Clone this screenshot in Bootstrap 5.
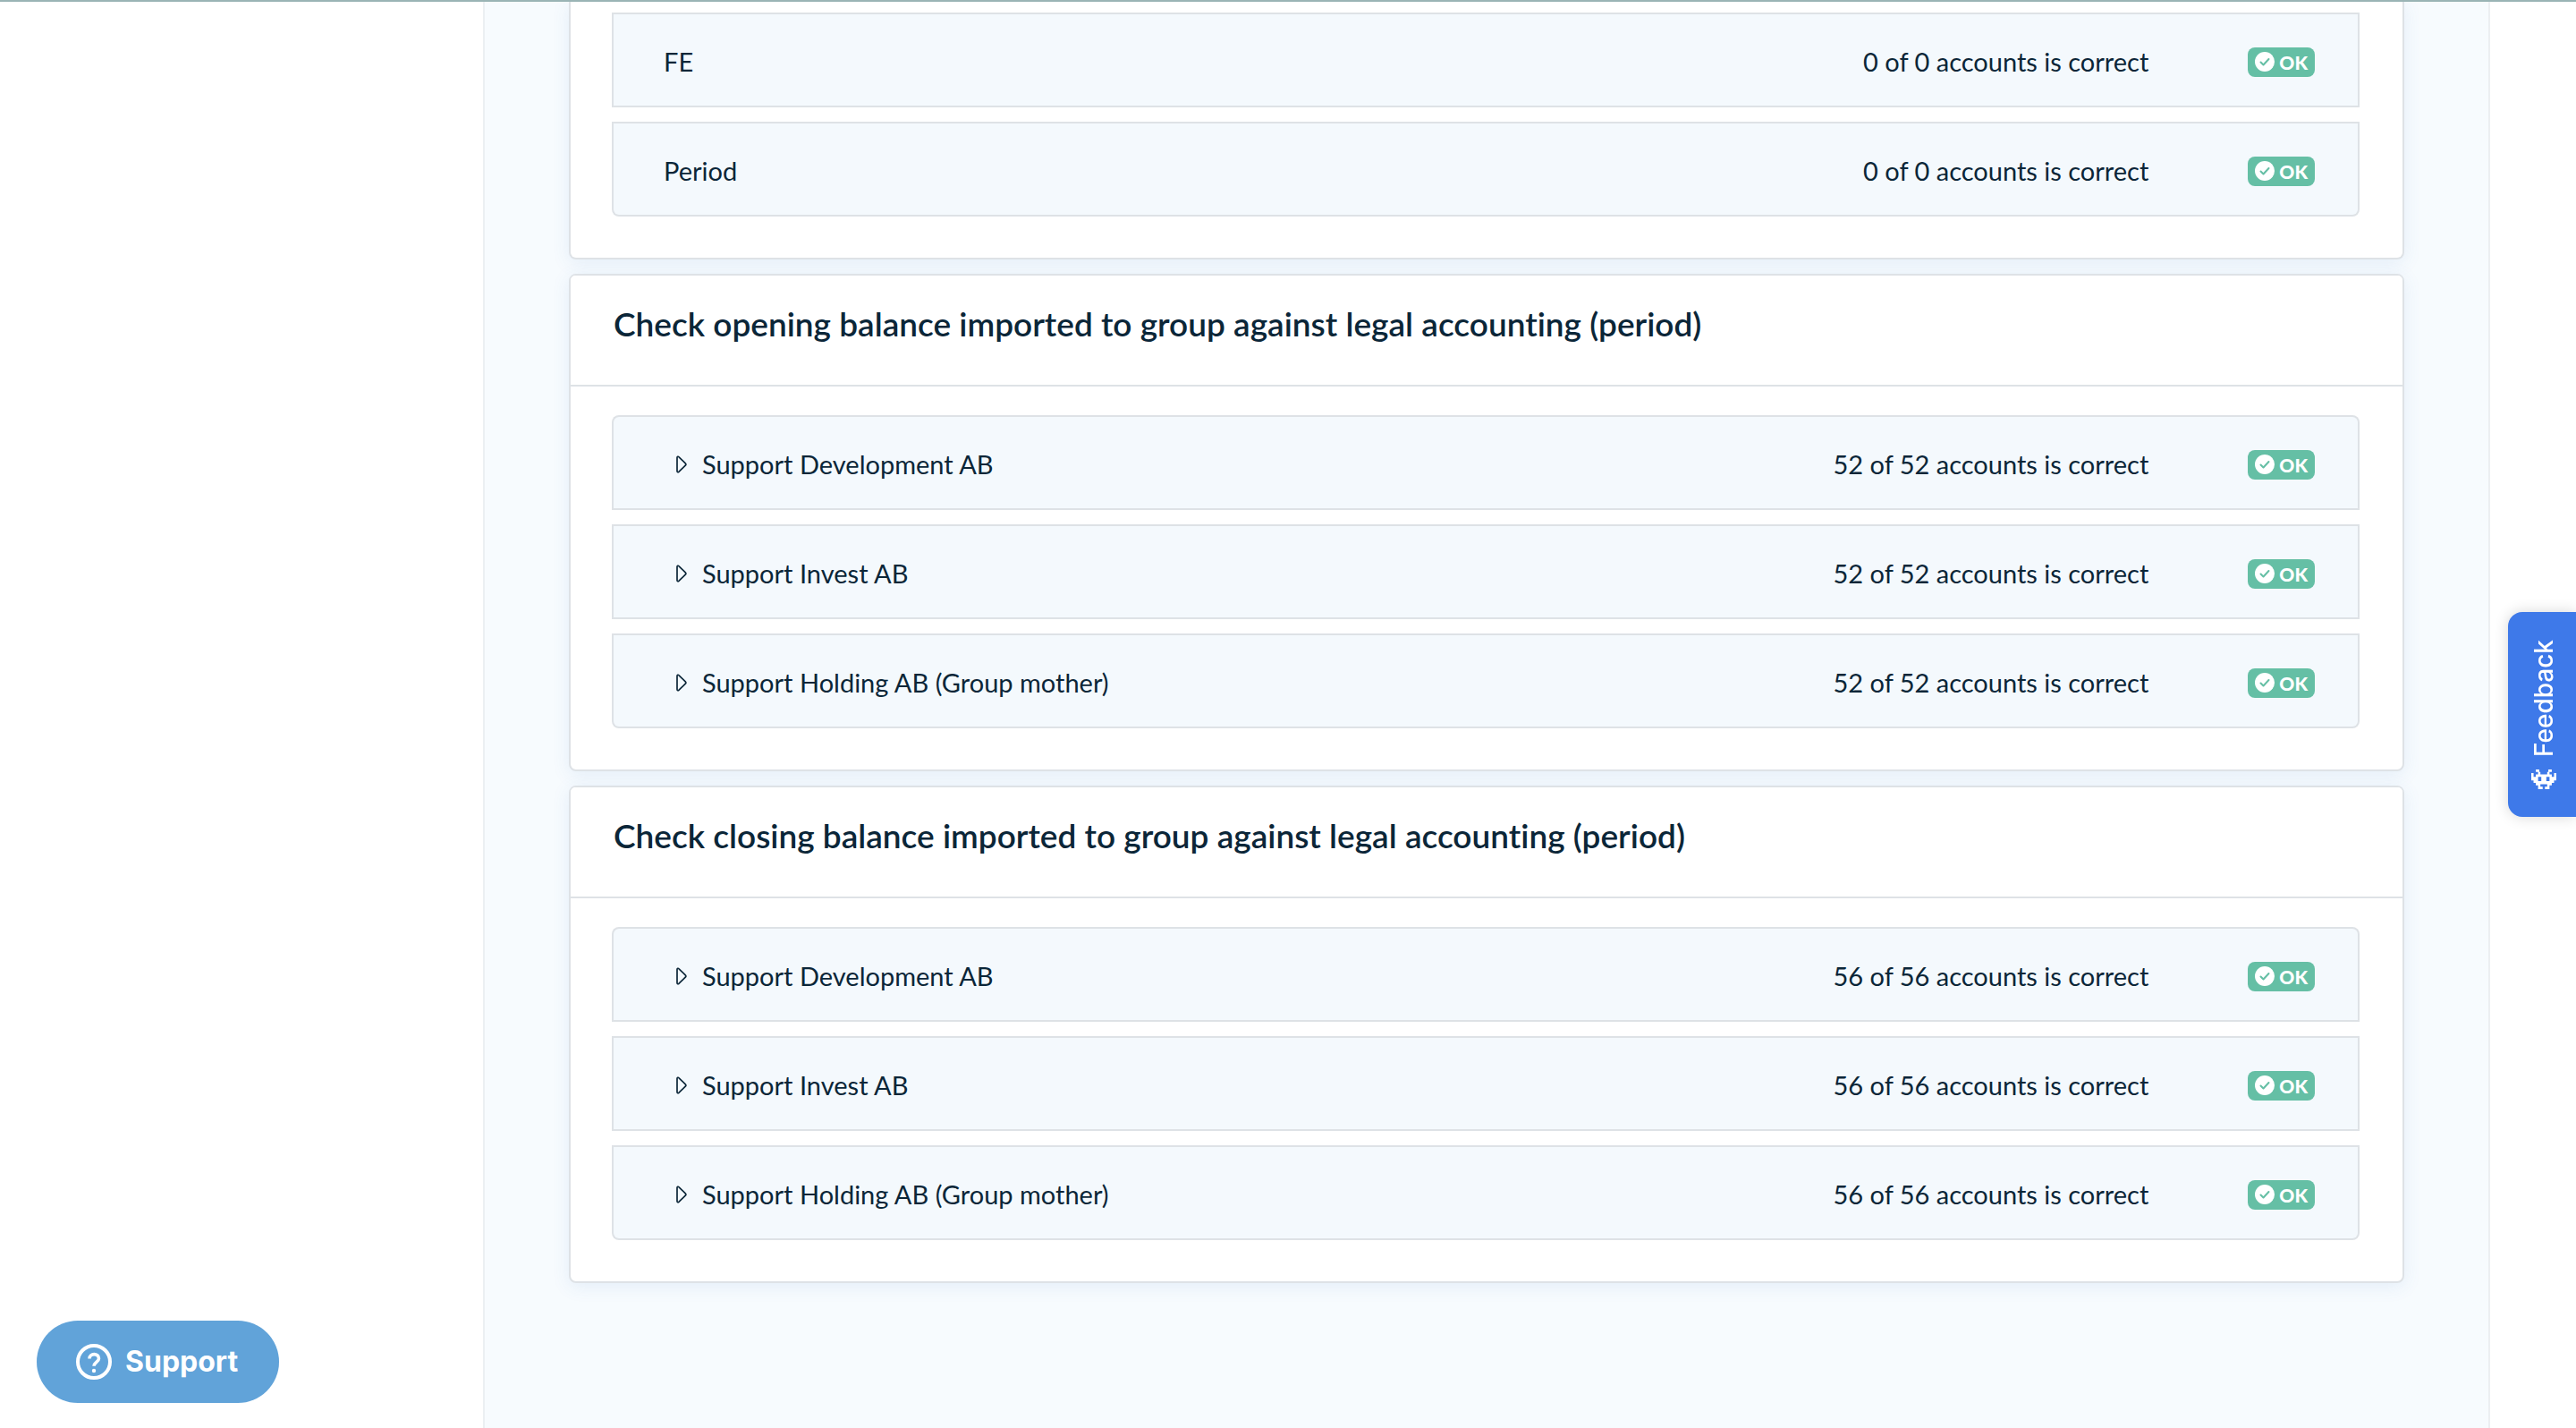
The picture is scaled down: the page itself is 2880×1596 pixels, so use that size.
<!DOCTYPE html>
<html lang="en">
<head>
<meta charset="utf-8">
<meta name="viewport" content="width=device-width, initial-scale=1">
<title>Group balance checks</title>
<link href="https://cdn.jsdelivr.net/npm/bootstrap@5.3.0/dist/css/bootstrap.min.css" rel="stylesheet">
<style>
  body { font-family: Lato, "Open Sans", sans-serif; font-size: 29px; line-height: 40px; color: #0b2638; background: #fff; font-variant-ligatures: none; }
  .top-line { height: 2px; background: #9ab4b5; }
  .side-left { width: 540px; }
  .side-right { width: 96px; }
  .page-main { background: #f7fbfe; border: solid #eceff2; border-width: 0 2px; padding: 2px 94px 0; gap: 16px; }
  .check-card { border: 2px solid #dee2e6; border-radius: 8px; box-shadow: 0 4px 20px rgba(60, 120, 200, .1); }
  .check-card .card-header { background: #fff; border-bottom: 2px solid #dee2e6; padding: 34px 48px 48px; }
  .check-card h2 { font-size: 37px; line-height: 40px; font-weight: 600; }
  .check-card .card-body { padding: 16px 48px 30px 46px; }
  .check-card.cut-top { border-top: 0; border-top-left-radius: 0; border-top-right-radius: 0; }
  .cut-top .card-body { padding-top: 0; margin-top: -4px; }
  .check-table { border-collapse: separate; border-spacing: 0 16px; }
  .check-table td { height: 106px; padding: 4px 0 0; background: #f4f9fd; border: solid #dee2e6; border-width: 2px 0; vertical-align: middle; white-space: nowrap; }
  .check-table td:first-child { border-left-width: 2px; padding-left: 56px; }
  .check-table td:last-child { border-right-width: 2px; padding-left: 111px; padding-right: 48px; width: 1%; }
  .round-first tr:first-child td:first-child { border-top-left-radius: 8px; }
  .round-first tr:first-child td:last-child { border-top-right-radius: 8px; }
  .check-table tr:last-child td:first-child { border-bottom-left-radius: 8px; }
  .check-table tr:last-child td:last-child { border-bottom-right-radius: 8px; }
  .row-toggle { background: none; border: 0; padding: 0 0 0 14px; color: inherit; gap: 17px; }
  .ok-badge { background: #65bfa5; color: #fff; font-size: 21px; line-height: 33px; font-weight: 900; border-radius: 8px; padding: 0 8px; gap: 5px; }
  .support-btn { left: 41px; bottom: 28px; height: 92px; padding: 0 46px 0 44px; gap: 15px; border: 0; background: #61a3d9; color: #fff; font: 700 32px/40px Inter, sans-serif; z-index: 5; }
  .feedback-btn { right: 0; top: 684px; width: 76px; height: 229px; padding: 0 4px 0 0; border: 0; border-radius: 0 16px 16px 0; background: #3e79e9; color: #fff; font: 500 28px/40px Inter, sans-serif; gap: 14px; writing-mode: vertical-rl; transform: rotate(180deg); box-shadow: 0 0 16px rgba(0, 0, 0, .16); z-index: 5; }
  .feedback-btn svg { transform: rotate(180deg); }
</style>
<script src="https://cdn.jsdelivr.net/npm/bootstrap@5.3.0/dist/js/bootstrap.bundle.min.js"></script>
</head>
<body>
<svg class="d-none" aria-hidden="true">
  <symbol id="tri" viewBox="0 0 12 20"><path d="M1 2.600v14.800c0 1.400 1.200 1.800 2.100.8l7.200-7c.8-.8.8-1.600 0-2.400l-7.200-7C2.200.8 1 1.200 1 2.600z" fill="none" stroke="currentColor" stroke-width="1.700"/></symbol>
  <symbol id="tick" viewBox="0 0 22 22"><circle cx="11" cy="11" r="11" fill="#fff"/><path d="M6.500 11.500l3 3 6-6.500" fill="none" stroke="#65bfa5" stroke-width="2" stroke-linecap="round" stroke-linejoin="round"/></symbol>
</svg>

<div class="top-line fixed-top"></div>

<div class="d-flex min-vh-100">
  <aside class="side-left flex-shrink-0"></aside>
  <main class="page-main flex-grow-1 d-flex flex-column">

    <section class="card check-card cut-top">
      <div class="card-body">
        <table class="check-table w-100">
          <tbody>
            <tr><td>FE</td><td class="text-end">0 of 0 accounts is correct</td><td><span class="ok-badge d-flex align-items-center"><svg width="22" height="22"><use href="#tick"/></svg>OK</span></td></tr>
            <tr><td>Period</td><td class="text-end">0 of 0 accounts is correct</td><td><span class="ok-badge d-flex align-items-center"><svg width="22" height="22"><use href="#tick"/></svg>OK</span></td></tr>
          </tbody>
        </table>
      </div>
    </section>

    <section class="card check-card">
      <div class="card-header"><h2 class="mb-0">Check opening balance imported to group against legal accounting (period)</h2></div>
      <div class="card-body">
        <table class="check-table round-first w-100">
          <tbody>
            <tr><td><button type="button" class="row-toggle d-flex align-items-center"><svg width="12" height="20"><use href="#tri"/></svg>Support Development AB</button></td><td class="text-end">52 of 52 accounts is correct</td><td><span class="ok-badge d-flex align-items-center"><svg width="22" height="22"><use href="#tick"/></svg>OK</span></td></tr>
            <tr><td><button type="button" class="row-toggle d-flex align-items-center"><svg width="12" height="20"><use href="#tri"/></svg>Support Invest AB</button></td><td class="text-end">52 of 52 accounts is correct</td><td><span class="ok-badge d-flex align-items-center"><svg width="22" height="22"><use href="#tick"/></svg>OK</span></td></tr>
            <tr><td><button type="button" class="row-toggle d-flex align-items-center"><svg width="12" height="20"><use href="#tri"/></svg>Support Holding AB (Group mother)</button></td><td class="text-end">52 of 52 accounts is correct</td><td><span class="ok-badge d-flex align-items-center"><svg width="22" height="22"><use href="#tick"/></svg>OK</span></td></tr>
          </tbody>
        </table>
      </div>
    </section>

    <section class="card check-card">
      <div class="card-header"><h2 class="mb-0">Check closing balance imported to group against legal accounting (period)</h2></div>
      <div class="card-body">
        <table class="check-table round-first w-100">
          <tbody>
            <tr><td><button type="button" class="row-toggle d-flex align-items-center"><svg width="12" height="20"><use href="#tri"/></svg>Support Development AB</button></td><td class="text-end">56 of 56 accounts is correct</td><td><span class="ok-badge d-flex align-items-center"><svg width="22" height="22"><use href="#tick"/></svg>OK</span></td></tr>
            <tr><td><button type="button" class="row-toggle d-flex align-items-center"><svg width="12" height="20"><use href="#tri"/></svg>Support Invest AB</button></td><td class="text-end">56 of 56 accounts is correct</td><td><span class="ok-badge d-flex align-items-center"><svg width="22" height="22"><use href="#tick"/></svg>OK</span></td></tr>
            <tr><td><button type="button" class="row-toggle d-flex align-items-center"><svg width="12" height="20"><use href="#tri"/></svg>Support Holding AB (Group mother)</button></td><td class="text-end">56 of 56 accounts is correct</td><td><span class="ok-badge d-flex align-items-center"><svg width="22" height="22"><use href="#tick"/></svg>OK</span></td></tr>
          </tbody>
        </table>
      </div>
    </section>

  </main>
  <aside class="side-right flex-shrink-0"></aside>
</div>

<button type="button" class="support-btn position-fixed rounded-pill d-flex align-items-center">
  <svg width="40" height="40" viewBox="0 0 40 40" fill="none" stroke="#fff" aria-hidden="true"><circle cx="20" cy="20" r="18" stroke-width="4"/><path d="M15 16.500c0-6.500 10.500-6.500 10.500-.3 0 4-5.500 4.300-5.500 8.600" stroke-width="3.600"/><circle cx="20" cy="30" r="2.200" fill="#fff" stroke="none"/></svg>
  Support
</button>

<button type="button" class="feedback-btn position-fixed d-flex align-items-center justify-content-center">
  <svg width="28" height="22" viewBox="0 0 11 8" preserveAspectRatio="none" fill="#fff" aria-hidden="true"><path fill-rule="evenodd" d="M2 0h1.500v1H4v1h3V1h.5V0H9v1H8v1h1v1h1V1.500h1V4.500h-1v1H9v1H8V8H6V7h1V6H4v1h1v1H3V6.500H2v-1H1v-1H0v-3h1V3h1V2h1V1H2zM3 3v1.700h1.400V3zM6.600 3v1.700H8V3z"/></svg>
  Feedback
</button>
</body>
</html>
